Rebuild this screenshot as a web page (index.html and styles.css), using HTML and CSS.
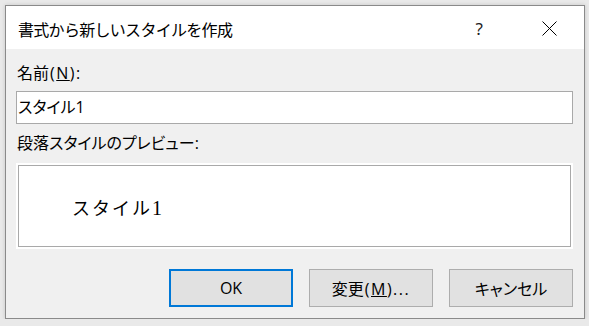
FILE: index.html
```html
<!DOCTYPE html>
<html lang="ja">
<head>
<meta charset="UTF-8">
<title>書式から新しいスタイルを作成</title>
<link rel="stylesheet" href="styles.css">
</head>
<body>

<div class="ventana">
  <div class="barra-titulo">
    <div class="titulo">書式から新しいスタイルを作成</div>
    <div class="controles">
      <span class="ayuda">?</span>
      <span class="cerrar">
        <svg width="15" height="15" viewBox="0 0 15 15">
          <path d="M0.5 0.5 L14.5 14.5 M14.5 0.5 L0.5 14.5" stroke="#000" stroke-width="1" fill="none"/>
        </svg>
      </span>
    </div>
  </div>

  <div class="contenido">
    <div class="etiqueta">名前<span class="tecla">(<u>N</u>):</span></div>
    <div class="campo">スタイル1</div>

    <div class="etiqueta etiqueta-vista">段落スタイルのプレビュー:</div>
    <div class="vista-previa">
      <div class="vista-interior">
        <span class="muestra">スタイル<span class="numero">1</span></span>
      </div>
    </div>

    <div class="botones">
      <button class="boton boton-principal">OK</button>
      <button class="boton">変更<span class="tecla">(<u>M</u>)...</span></button>
      <button class="boton">キャンセル</button>
    </div>
  </div>
</div>

</body>
</html>
```

FILE: styles.css
```css
body {
  margin: 0;
  background: #e9e9e9;
  font-family: "Open Sans", "Noto Sans CJK JP", sans-serif;
  color: #000;
}

.ventana {
  box-sizing: border-box;
  width: 580px;
  height: 314px;
  margin: 5px 0 0 5px;
  border: 1px solid #8a8a8a;
  background: #f0f0f0;
  box-shadow: 0 0 4px rgba(0, 0, 0, 0.15);
  display: flex;
  flex-direction: column;
}

.barra-titulo {
  height: 43px;
  background: #fff;
  display: flex;
  align-items: center;
  justify-content: space-between;
}

.titulo {
  padding-left: 12px;
  font-size: 16px;
  letter-spacing: -0.7px;
  padding-top: 2px;
}

.controles {
  display: flex;
  align-items: center;
  gap: 59px;
  padding-right: 27px;
  padding-top: 1px;
}

.ayuda {
  font-family: "Noto Sans", sans-serif;
  font-size: 17px;
  color: #222;
  line-height: 1;
}

.cerrar {
  display: flex;
}

.contenido {
  flex: 1;
  display: flex;
  flex-direction: column;
  padding: 0 11px 0 10px;
}

.etiqueta {
  font-size: 16px;
  line-height: 22px;
  margin-top: 13px;
  padding-left: 1px;
  font-feature-settings: "palt";
}

.tecla {
  letter-spacing: 1.5px;
  margin-left: 1px;
}

.etiqueta-vista {
  margin-top: 8px;
}

.campo {
  box-sizing: border-box;
  height: 33px;
  margin-top: 7px;
  border: 1px solid #a9a9a9;
  background: #fff;
  font-size: 16px;
  font-feature-settings: "palt";
  line-height: 30px;
  padding-left: 1px;
}

.vista-previa {
  box-sizing: border-box;
  height: 86px;
  margin-top: 9px;
  padding: 2px;
  background: #fff;
}

.vista-interior {
  box-sizing: border-box;
  height: 100%;
  border: 1px solid #a9a9a9;
  display: flex;
  align-items: center;
  padding-left: 53px;
}

.muestra {
  font-size: 18px;
  letter-spacing: 2px;
  padding-top: 2px;
}

.numero {
  font-family: "Liberation Serif", serif;
  font-size: 20px;
  letter-spacing: 0;
}

.botones {
  display: flex;
  justify-content: flex-end;
  gap: 16px;
  margin-top: 20px;
}

.boton {
  box-sizing: border-box;
  width: 124px;
  height: 38px;
  border: 1px solid #adadad;
  background: #e1e1e1;
  font-family: "Open Sans", "Noto Sans CJK JP", sans-serif;
  font-size: 16px;
  font-feature-settings: "palt";
  color: #000;
  padding: 0;
}

.boton-principal {
  border: 2px solid #0078d7;
}
```
